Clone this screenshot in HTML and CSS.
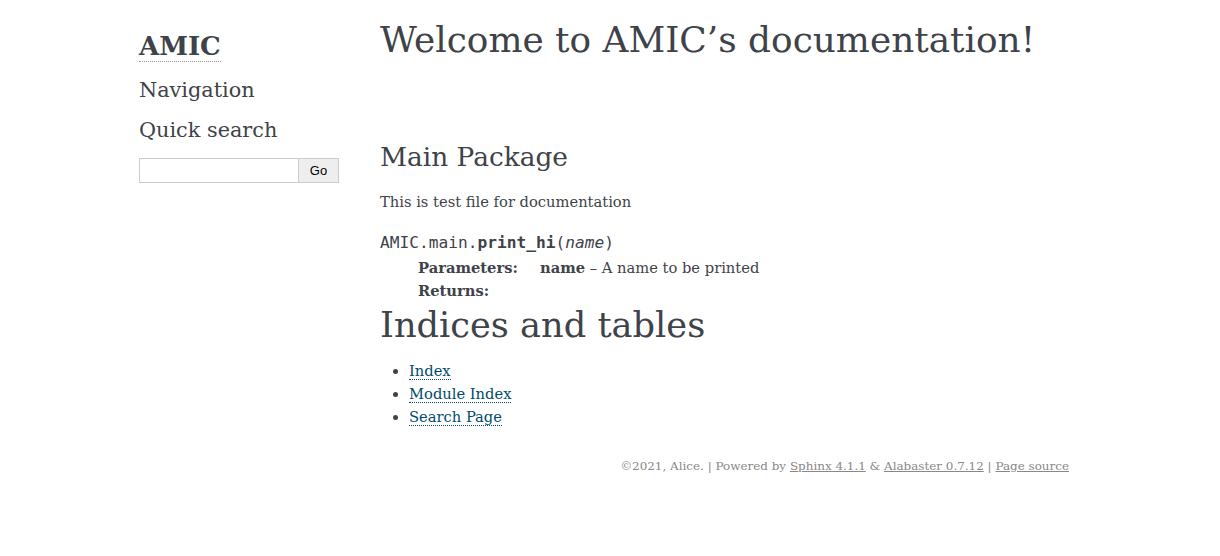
FILE: index.html
```html
<!DOCTYPE html>
<html lang="en">
<head>
<meta charset="utf-8">
<title>Welcome to AMIC's documentation! — AMIC documentation</title>
<link rel="stylesheet" href="styles.css">
</head>
<body>
<div class="document">
  <div class="sidebar">
    <h1 class="logo"><a href="#">AMIC</a></h1>
    <h3 class="side-title">Navigation</h3>
    <h3 class="side-title">Quick search</h3>
    <form class="search">
      <input class="search-input" type="text" aria-label="search">
      <button class="search-btn" type="button">Go</button>
    </form>
  </div>
  <div class="body">
    <h1 class="title">Welcome to AMIC’s documentation!</h1>
    <h2 class="subtitle">Main Package</h2>
    <p class="para">This is test file for documentation</p>
    <dl class="func">
      <dt class="sig"><span class="sig-prename">AMIC.main.</span><span class="sig-name">print_hi</span><span class="paren">(</span><em class="sig-param">name</em><span class="paren">)</span></dt>
      <dd class="sig-body">
        <div class="field"><span class="field-name">Parameters:</span><span class="field-body"><strong>name</strong> – A name to be printed</span></div>
        <div class="field"><span class="field-name">Returns:</span><span class="field-body"></span></div>
      </dd>
    </dl>
    <h1 class="title title-second">Indices and tables</h1>
    <ul class="links">
      <li><a href="#">Index</a></li>
      <li><a href="#">Module Index</a></li>
      <li><a href="#">Search Page</a></li>
    </ul>
  </div>
</div>
<div class="footer">©2021, Alice. | Powered by <a href="#">Sphinx 4.1.1</a> &amp; <a href="#">Alabaster 0.7.12</a> | <a href="#">Page source</a></div>
</body>
</html>
```
FILE: styles.css
```css
html, body {
  margin: 0;
  padding: 0;
  background: #fff;
}
body {
  font-family: "DejaVu Serif", Georgia, serif;
  font-size: 14.7px;
  color: #3e4349;
}
.document {
  width: 942px;
  margin: 14px auto 0;
  display: flex;
}
.sidebar {
  width: 241px;
  flex: none;
  padding-top: 3px;
}
.logo {
  margin: 11px 0 0;
  font-size: 26px;
  font-weight: bold;
  line-height: 36px;
}
.logo a {
  color: #3e4349;
  text-decoration: none;
  border-bottom: 1px dotted #999;
}
.side-title {
  margin: 11px 0 0;
  font-size: 20.8px;
  font-weight: normal;
  line-height: 30px;
}
.side-title + .side-title {
  margin-top: 10px;
}
.search {
  display: flex;
  margin-top: 13px;
  width: 200px;
}
.search-input {
  width: 160px;
  height: 25px;
  box-sizing: border-box;
  border: 1px solid #ccc;
  margin: 0;
  padding: 0 4px;
}
.search-btn {
  width: 41px;
  height: 25px;
  box-sizing: border-box;
  border: 1px solid #ccc;
  border-left: none;
  background: #eee;
  margin: 0;
  padding: 0;
  font-family: "Liberation Sans", Arial, sans-serif;
  font-size: 13px;
  color: #000;
}
.body {
  flex: 1;
}
.title {
  margin: 0;
  font-size: 35.9px;
  font-weight: normal;
  line-height: 52px;
}
.title-second {
  font-size: 35.2px;
  margin-top: -3px;
}
.subtitle {
  margin: 71px 0 0;
  font-size: 26.4px;
  font-weight: normal;
  line-height: 40px;
}
.para {
  margin: 12px 0 0;
  line-height: 26px;
}
.func {
  margin: 16px 0 0;
}
.sig {
  font-family: "DejaVu Sans Mono", monospace;
  font-size: 16.2px;
  line-height: 24px;
}
.sig-name {
  font-weight: bold;
}
.sig-param {
  font-style: italic;
}
.sig-body {
  margin: 1px 0 0 38px;
}
.field {
  display: flex;
  line-height: 23px;
}
.field-name {
  font-weight: bold;
  width: 122px;
  flex: none;
}
.links {
  margin: 8px 0 0;
  padding-left: 29px;
}
.links li {
  line-height: 23px;
}
.links a {
  color: #004b6b;
  text-decoration: none;
  border-bottom: 1px dotted #004b6b;
}
.footer {
  width: 942px;
  margin: 31px auto 0;
  padding-right: 12px;
  box-sizing: border-box;
  text-align: right;
  font-size: 11.95px;
  color: #888;
}
.footer a {
  color: #888;
  text-decoration: underline;
}
```
